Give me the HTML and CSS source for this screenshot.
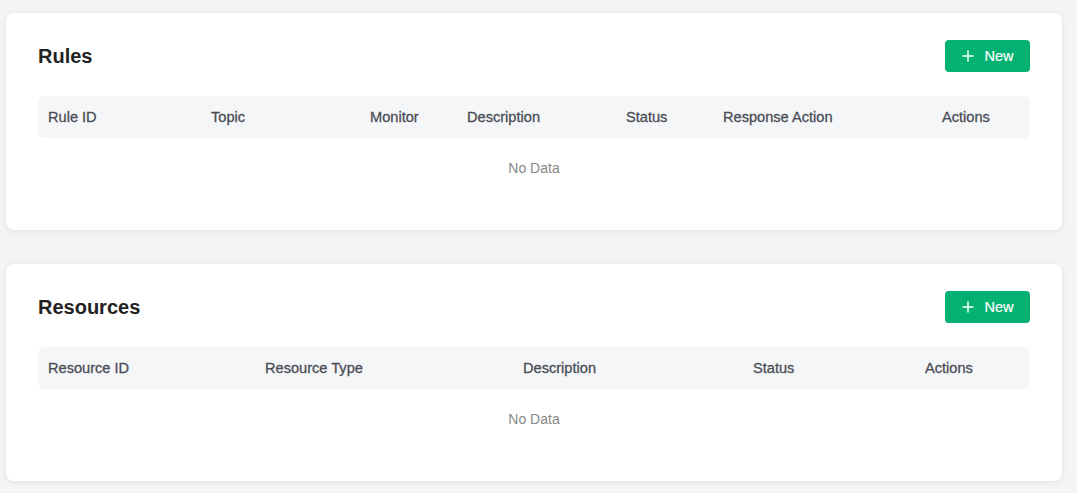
FILE: index.html
```html
<!DOCTYPE html>
<html lang="en">
<head>
<meta charset="utf-8">
<title>Rules and Resources</title>
<link rel="stylesheet" href="styles.css">
</head>
<body>
<main class="page">
  <section class="card">
    <div class="card-head">
      <h2 class="card-title">Rules</h2>
      <button class="btn-new" type="button">
        <svg class="plus" width="12" height="12" viewBox="0 0 12 12" aria-hidden="true"><path d="M6 0.5V11.5M0.5 6H11.5" stroke="#fff" stroke-width="1.5" fill="none"/></svg>
        <span>New</span>
      </button>
    </div>
    <table class="data-table">
      <colgroup>
        <col style="width:163px"><col style="width:159px"><col style="width:97px"><col style="width:159px"><col style="width:97px"><col style="width:219px"><col style="width:98px">
      </colgroup>
      <thead>
        <tr><th>Rule ID</th><th>Topic</th><th>Monitor</th><th>Description</th><th>Status</th><th>Response Action</th><th>Actions</th></tr>
      </thead>
      <tbody>
        <tr><td class="empty" colspan="7">No Data</td></tr>
      </tbody>
    </table>
  </section>

  <section class="card">
    <div class="card-head">
      <h2 class="card-title">Resources</h2>
      <button class="btn-new" type="button">
        <svg class="plus" width="12" height="12" viewBox="0 0 12 12" aria-hidden="true"><path d="M6 0.5V11.5M0.5 6H11.5" stroke="#fff" stroke-width="1.5" fill="none"/></svg>
        <span>New</span>
      </button>
    </div>
    <table class="data-table">
      <colgroup>
        <col style="width:217px"><col style="width:258px"><col style="width:230px"><col style="width:172px"><col style="width:115px">
      </colgroup>
      <thead>
        <tr><th>Resource ID</th><th>Resource Type</th><th>Description</th><th>Status</th><th>Actions</th></tr>
      </thead>
      <tbody>
        <tr><td class="empty" colspan="5">No Data</td></tr>
      </tbody>
    </table>
  </section>
</main>
</body>
</html>
```

FILE: styles.css
```css
* { box-sizing: border-box; }

html, body {
  margin: 0;
  padding: 0;
  background: #f3f4f6;
  font-family: "Liberation Sans", Arial, sans-serif;
  color: #222;
}

.page {
  display: flex;
  flex-direction: column;
  gap: 34px;
  padding: 13px 15px 12px 6px;
}

.card {
  background: #fff;
  border-radius: 8px;
  box-shadow: 0 1px 6px rgba(0, 0, 0, 0.08);
  padding: 27px 32px 32px 32px;
}

.card-head {
  display: flex;
  align-items: center;
  justify-content: space-between;
  height: 32px;
  margin-bottom: 24px;
}

.card-title {
  margin: 0;
  font-size: 20px;
  font-weight: 700;
  color: #222;
  line-height: 32px;
}

.btn-new {
  display: flex;
  align-items: center;
  justify-content: center;
  gap: 10px;
  width: 85px;
  height: 32px;
  border: none;
  border-radius: 4px;
  background: #03b273;
  color: #fff;
  font-family: "Liberation Sans", Arial, sans-serif;
  font-size: 14.5px;
  padding: 0 0 0 1px;
  cursor: pointer;
  -webkit-text-stroke: 0.2px #fff;
}

.plus { display: block; }

.data-table {
  width: 100%;
  table-layout: fixed;
  border-collapse: separate;
  border-spacing: 0;
}

.data-table th {
  background: #f5f6f8;
  height: 42px;
  padding: 0 10px;
  text-align: left;
  font-size: 14.6px;
  font-weight: 400;
  color: #4a4d55;
  -webkit-text-stroke: 0.3px #4a4d55;
  white-space: nowrap;
}

.data-table th:first-child { border-radius: 6px 0 0 6px; }
.data-table th:last-child { border-radius: 0 6px 6px 0; }

.data-table td.empty {
  height: 60px;
  text-align: center;
  font-size: 14px;
  color: #888;
  padding: 0;
}
```
